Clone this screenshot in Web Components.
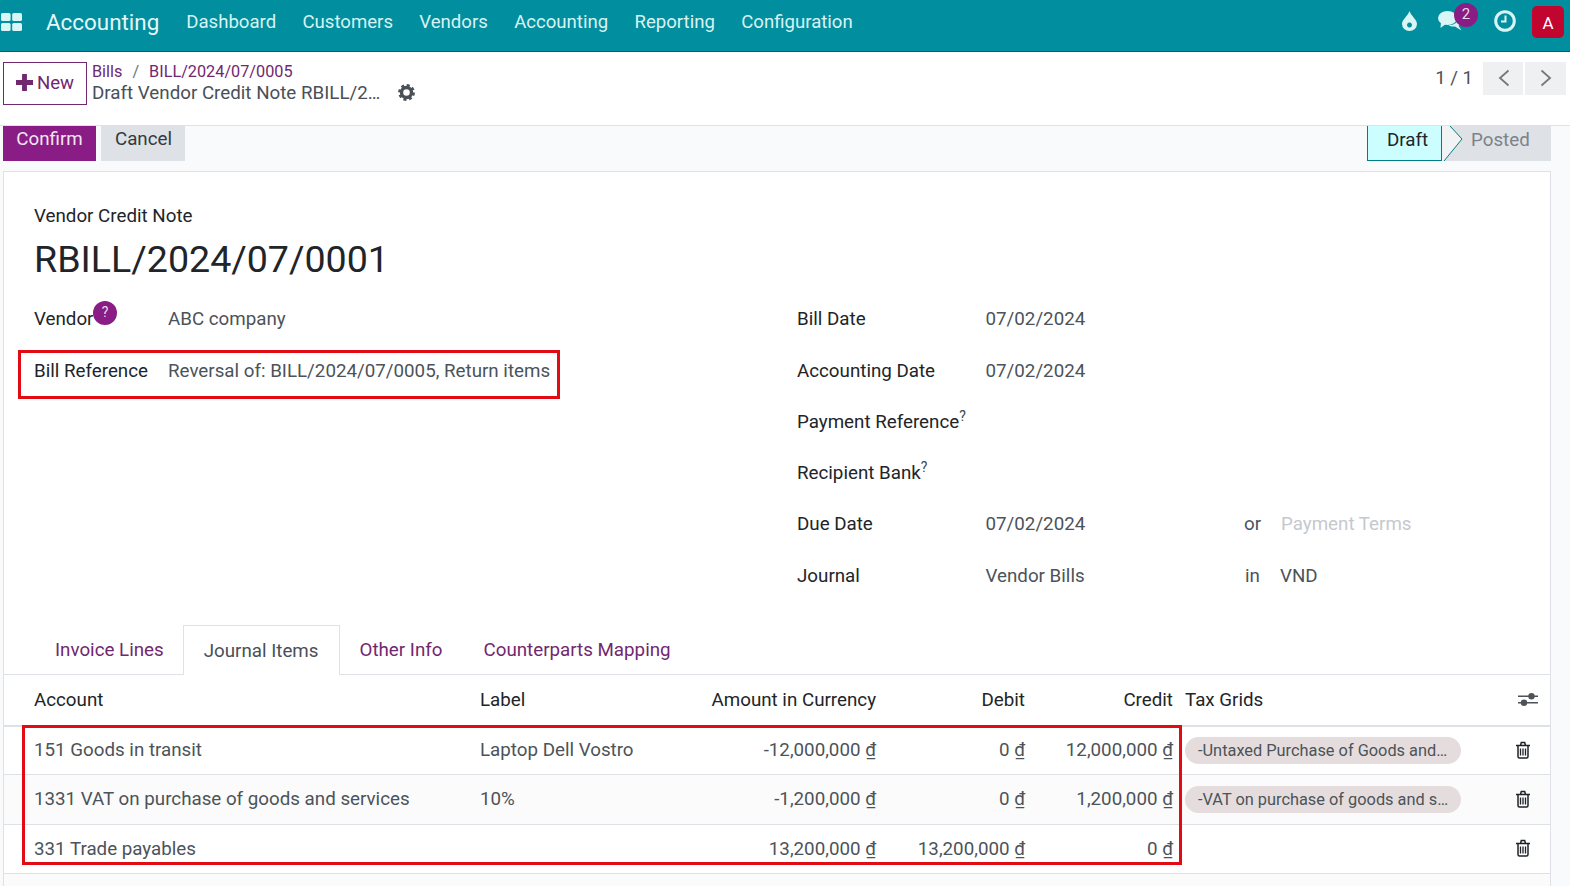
<!DOCTYPE html>
<html><head><meta charset="utf-8"><title>Vendor Credit Note</title>
<style>
html,body{margin:0;padding:0;height:886px;overflow:hidden;background:#f9fafb;font-family:Roboto,"Liberation Sans",sans-serif;font-size:18.750px;color:#212529}
</style></head><body>
<o-navbar>
  <o-nav-item>Dashboard</o-nav-item><o-nav-item>Customers</o-nav-item><o-nav-item>Vendors</o-nav-item><o-nav-item>Accounting</o-nav-item><o-nav-item>Reporting</o-nav-item><o-nav-item>Configuration</o-nav-item>
</o-navbar>
<o-control-panel></o-control-panel>
<o-statusbar></o-statusbar>
<o-sheet>
  <o-form-head></o-form-head>
  <o-form-grid></o-form-grid>
  <o-tabs></o-tabs>
  <o-lines-table></o-lines-table>
</o-sheet>
<script>
const el=(name,html)=>customElements.define(name,class extends HTMLElement{constructor(){super();this.attachShadow({mode:'open'}).innerHTML=html;}});

el('o-nav-item',`<style>:host{display:block;color:#d8f3f3;font-size:18.600px;line-height:24px;margin-right:26.300px;white-space:nowrap}</style><slot></slot>`);

el('o-navbar',`<style>
:host{display:flex;align-items:center;height:51px;background:#018e9e;border-bottom:1px solid #015f69;box-sizing:content-box}
.apps{margin:-7px 24px 0 1px;display:block}
.brand{color:#e6f7f7;font-size:22.400px;line-height:28px;margin:-8px 27px 0 0;}
nav{display:flex;flex:1;margin-top:-8px}
.sys{display:flex;align-items:center;margin-top:-10px;position:relative}
.badge{position:absolute;left:52px;top:-1px;width:24px;height:24px;border-radius:50%;background:#8a1c85;color:#e6dbe6;font-size:15px;line-height:22px;text-align:center}
.avatar{width:32px;height:32px;border-radius:5px;background:#c2052f;color:#fff;font-size:17px;line-height:34px;text-align:center;margin:2px 6px 0 0}
svg{display:block}
</style>
<svg class="apps" width="21" height="18" viewBox="0 0 21 18" fill="#d9f6f6"><rect width="9.6" height="8" rx="1.6"/><rect x="11.2" width="9.8" height="8" rx="1.6"/><rect y="10" width="9.6" height="8" rx="1.6"/><rect x="11.2" y="10" width="9.8" height="8" rx="1.6"/></svg>
<span class="brand">Accounting</span>
<nav><slot></slot></nav>
<div class="sys">
<svg style="margin-right:21px" width="15" height="20" viewBox="0 0 15 20"><path fill="#d9f6f6" fill-rule="evenodd" d="M7.5 0C9 5 15 8.500 15 13a7.500 7 0 0 1-15 0C0 8.500 6 5 7.500 0ZM7.500 11.500a2.500 2.500 0 1 0 .01 0Z"/></svg>
<svg style="margin-right:32px" width="24" height="20" viewBox="0 0 24 20" fill="#d9f6f6"><ellipse cx="9.500" cy="7" rx="9.500" ry="7"/><path d="M3 11l-.5 6 6-4.500z"/><path d="M20.500 5.500c2.500 1.500 3.500 3.500 3 5.500-.5 1.700-1.500 3-3 3.700L23.500 19.500l-6.500-4c-2.500.3-5-.3-6.500-1.500 5.500.5 10.500-3 10-8.500z"/></svg>
<span class="badge">2</span>
<svg style="margin-right:16px" width="22" height="22" viewBox="0 0 22 22" fill="none" stroke="#d9f6f6"><circle cx="11" cy="11" r="9.300" stroke-width="3"/><path d="M11.500 5.500v6H7" stroke-width="2"/></svg>
<div class="avatar">A</div>
</div>`);

el('o-control-panel',`<style>
:host{display:flex;height:73px;background:#fff;border-bottom:1px solid #dfe2e5;box-sizing:content-box}
.new{box-sizing:border-box;width:84px;height:43px;margin:10px 0 0 3px;padding-bottom:2px;border:1px solid #71286f;color:#71286f;display:flex;align-items:center;justify-content:center;gap:4px;font-size:18.600px}
.crumbs{margin:9px 0 0 5px;line-height:21px}
.b{font-size:16.250px;color:#71286f;display:flex;height:20px;align-items:center}
.b i{font-style:normal;color:#6c757d;margin:0 10px}
.t{font-size:18.750px;color:#495057;display:flex;align-items:center;height:23px;white-space:nowrap}
.t span{padding-top:2px}
.t svg{margin-left:18px}
.pager{margin-left:auto;display:flex;align-items:flex-start;padding-top:10px}
.n{font-size:18.600px;color:#4c5257;line-height:32px;margin-right:10px}
.p{box-sizing:border-box;padding:0 0 2px 1px;width:40px;height:33px;background:#eff0f2;display:flex;align-items:center;justify-content:center;margin-right:2px}
.p:last-child{width:41px;margin-right:4px;padding-left:0}
</style>
<div class="new"><svg width="17" height="17" viewBox="1 1 14 14"><path fill="#71286f" d="M6 1h4v5h5v4h-5v5H6v-5H1V6h5z"/></svg><span>New</span></div>
<div class="crumbs"><div class="b"><span>Bills</span><i>/</i><span>BILL/2024/07/0005</span></div>
<div class="t"><span>Draft Vendor Credit Note RBILL/2…</span><svg width="17" height="17" viewBox="0 0 17 17"><circle cx="8.500" cy="8.500" r="5" fill="none" stroke="#495057" stroke-width="3.400"/><circle cx="8.500" cy="8.500" r="7.200" fill="none" stroke="#495057" stroke-width="2.400" stroke-dasharray="3 2.660"/></svg></div></div>
<div class="pager"><span class="n">1 / 1</span>
<div class="p"><svg width="12" height="18" viewBox="0 0 12 18" fill="none" stroke="#777" stroke-width="1.800"><path d="M10.500 1.500L2 9l8.500 7.500"/></svg></div>
<div class="p"><svg width="12" height="18" viewBox="0 0 12 18" fill="none" stroke="#777" stroke-width="1.800"><path d="M1.500 1.500L10 9l-8.500 7.500"/></svg></div></div>`);

el('o-statusbar',`<style>
:host{display:flex;height:35px;padding-left:3px;box-sizing:content-box;font-size:18.750px}
.b{height:35px;line-height:26px;text-align:center;box-sizing:border-box}
.c{width:93px;background:#8a1c85;color:#f0e6f0;margin-right:5px}
.x{width:84px;background:#dee2e6;color:#343a40;padding-left:1px}
.st{margin-left:auto;margin-right:19px;display:flex;position:relative;height:35px;width:184px;background:#dee2e6;line-height:28px}
.d{box-sizing:border-box;width:75px;background:#ccfdff;border:1px solid #017e84;border-top:0;color:#212529;text-align:center;padding-left:6px}
.po{color:#7c8288;margin-left:29px}
svg{position:absolute;left:75px;top:0}
</style>
<div class="b c">Confirm</div><div class="b x">Cancel</div>
<div class="st"><div class="d">Draft</div><span class="po">Posted</span>
<svg width="22" height="35" viewBox="0 0 22 35"><path d="M0 0H8L20 13 2 35H0z" fill="#f1f3f4"/><path d="M8 0L20 13 2 35" fill="none" stroke="#017e84"/></svg></div>`);

el('o-sheet',`<style>
:host{display:block;position:relative;box-sizing:border-box;margin:10px 0 0 3px;width:1548px;height:720px;background:#fff;border:1px solid #dee2e6}
.red{position:absolute;box-sizing:border-box;border:3px solid #e30b13;pointer-events:none}
.r1{left:14px;top:178px;width:542px;height:49px}
.r2{left:18px;top:553px;width:1160px;height:140px}
</style><slot></slot><div class="red r1"></div><div class="red r2"></div>`);

el('o-form-head',`<style>
:host{display:block;padding:31px 0 0 30px}
.k{font-size:18.750px;line-height:26px;color:#212529}
h1{margin:7px 0 0;font-size:37.600px;font-weight:400;line-height:46px;color:#212529}
</style><div class="k">Vendor Credit Note</div><h1>RBILL/2024/07/0001</h1>`);

el('o-field',`<style>
:host{display:grid;height:51.250px;align-items:center;font-size:18.750px;line-height:24px}
.l{color:#212529;white-space:nowrap;position:relative}
.v{color:#4c5359;white-space:nowrap}
</style><div class="l"><slot name="l"></slot></div><div class="v"><slot></slot></div>`);

el('o-form-grid',`<style>
:host{display:grid;grid-template-columns:762px 1fr;padding:11px 0 0 30px;font-size:18.750px}
.R{padding-left:1px}
o-field.a{grid-template-columns:134px 1fr}
o-field.b{grid-template-columns:188.500px 1fr}
o-field.top{height:52px}
.q{position:absolute;left:59px;top:-6px;width:24px;height:24px;border-radius:50%;background:#8a1c85;color:#e6dbe6;font-size:14px;line-height:23px;text-align:center}
sup{font-size:14px;line-height:0;vertical-align:7px;color:#444}
.g{color:#c4c9ce}
.m{color:#4c5359}
.f{display:inline-flex;width:450px}
</style>
<div>
<o-field class="a top"><span slot="l">Vendor<span class="q">?</span></span>ABC company</o-field>
<o-field class="a"><span slot="l">Bill Reference</span>Reversal of: BILL/2024/07/0005, Return items</o-field>
</div>
<div class="R">
<o-field class="b top"><span slot="l">Bill Date</span>07/02/2024</o-field>
<o-field class="b"><span slot="l">Accounting Date</span>07/02/2024</o-field>
<o-field class="b"><span slot="l">Payment Reference<sup>?</sup></span></o-field>
<o-field class="b"><span slot="l">Recipient Bank<sup>?</sup></span></o-field>
<o-field class="b"><span slot="l">Due Date</span><span class="f"><span style="width:258.500px">07/02/2024</span><span class="m" style="width:37px">or</span><span class="g">Payment Terms</span></span></o-field>
<o-field class="b"><span slot="l">Journal</span><span class="f"><span style="width:259.500px">Vendor Bills</span><span class="m" style="width:35px">in</span><span>VND</span></span></o-field>
</div>`);

el('o-tabs',`<style>
:host{display:flex;height:50px;box-sizing:border-box;margin-top:23.500px;padding-left:30px;border-bottom:1px solid #dee2e6;font-size:18.750px}
.t{box-sizing:border-box;height:50px;padding:0 20px;line-height:50px;color:#71286f;white-space:nowrap}
.on{color:#495057;background:#fff;border:1px solid #dee2e6;border-bottom:0;margin-left:-1px}
</style><div class="t" style="padding-left:21px">Invoice Lines</div><div class="t on">Journal Items</div><div class="t">Other Info</div><div class="t" style="margin-left:1px">Counterparts Mapping</div>`);

const trash=`<svg width="16" height="18" viewBox="0 0 16 18" fill="none" stroke="#1f2328" stroke-width="1.500"><path d="M1 4.500h14M3 4.500V15.500a1.500 1.500 0 0 0 1.500 1.500h7a1.500 1.500 0 0 0 1.500-1.500V4.500M5.500 4.500L6.300 1.500h3.400l.8 3"/><path stroke-width="1.300" d="M5.500 7.500v7M8 7.500v7M10.500 7.500v7"/></svg>`;
const cols='grid-template-columns:446px 248px 148px 149px 148px 1fr 35px';
el('o-lines-table',`<style>
:host{display:block;font-size:18.750px}
.hr,.row{display:grid;${cols};align-items:center;box-sizing:border-box;padding-left:30px;white-space:nowrap}
.hr{height:52px;border-bottom:2px solid #dee2e6;color:#212529}
.row{border-bottom:1px solid #dee2e6;color:#4c5359;background:#fff}
.alt{background:#fbfbfb}
.r{text-align:right;min-width:0}
.am{margin-left:-60px}
.tax{padding-left:12px}
.tag{display:inline-block;box-sizing:border-box;width:276px;height:27px;line-height:27px;padding-left:13px;border-radius:14px;background:#e5dddd;color:#4c5359;font-size:16.350px}
.i svg{display:block;margin-top:-1px}
.i svg.s{margin:0 0 0 3px}
.foot{height:14px;background:#fbfbfb}
</style>
<div class="hr"><span>Account</span><span>Label</span><span class="r am">Amount in Currency</span><span class="r">Debit</span><span class="r">Credit</span><span class="tax">Tax Grids</span><span class="i"><svg class="s" width="20" height="15" viewBox="0 0 20 15" fill="#4c5359"><path d="M0 3.500h20v1.400H0zM0 10h20v1.400H0z"/><circle cx="13.500" cy="4.200" r="3.200"/><circle cx="6" cy="10.700" r="3.200"/></svg></span></div>
<div class="row" style="height:48px"><span>151 Goods in transit</span><span>Laptop Dell Vostro</span><span class="r">-12,000,000&nbsp;₫</span><span class="r">0&nbsp;₫</span><span class="r">12,000,000&nbsp;₫</span><span class="tax"><span class="tag">-Untaxed Purchase of Goods and…</span></span><span class="i">${trash}</span></div>
<div class="row alt" style="height:50px"><span>1331 VAT on purchase of goods and services</span><span>10%</span><span class="r">-1,200,000&nbsp;₫</span><span class="r">0&nbsp;₫</span><span class="r">1,200,000&nbsp;₫</span><span class="tax"><span class="tag">-VAT on purchase of goods and s…</span></span><span class="i">${trash}</span></div>
<div class="row" style="height:49px"><span>331 Trade payables</span><span></span><span class="r">13,200,000&nbsp;₫</span><span class="r">13,200,000&nbsp;₫</span><span class="r">0&nbsp;₫</span><span></span><span class="i">${trash}</span></div>
<div class="foot"></div>`);
</script>
</body></html>
